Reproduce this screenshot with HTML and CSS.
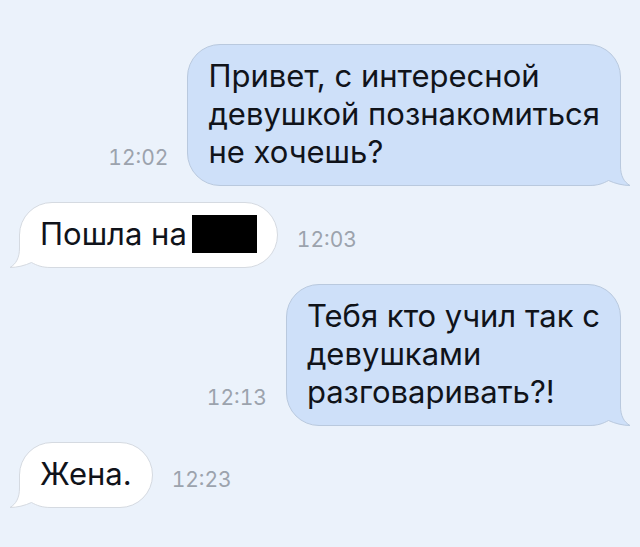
FILE: index.html
```html
<!DOCTYPE html>
<html lang="ru">
<head>
    <meta charset="UTF-8">
    <meta name="viewport" content="width=device-width, initial-scale=1.0">
    <title>Сообщения</title>
    <link rel="stylesheet" href="styles.css">
</head>
<body>
    <main class="chat">
        <div class="message out">
            <time class="time">12:02</time>
            <div class="bubble">
                <p>Привет, с интересной<br>девушкой познакомиться<br>не хочешь?</p>
                <svg class="tail" width="44" height="34" viewBox="0 0 44 34" aria-hidden="true">
                    <path class="tail-fill" d="M0 0H33.5V14C33.5 24 37 30 43 33.5C36 33.5 28 31.5 21.5 28.5C16 31.5 11 33.5 2 33.5H0Z"/>
                    <path class="tail-line" d="M33.5 0V14C33.5 24 37 30 43 33.5C36 33.5 28 31.5 21.5 28.5C16 31.5 11 33.5 2 33.5H0"/>
                </svg>
            </div>
        </div>
        <div class="message in">
            <div class="bubble">
                <p>Пошла на<span class="censored"></span></p>
                <svg class="tail" width="44" height="34" viewBox="0 0 44 34" aria-hidden="true">
                    <path class="tail-fill" d="M0 0H33.5V14C33.5 24 37 30 43 33.5C36 33.5 28 31.5 21.5 28.5C16 31.5 11 33.5 2 33.5H0Z"/>
                    <path class="tail-line" d="M33.5 0V14C33.5 24 37 30 43 33.5C36 33.5 28 31.5 21.5 28.5C16 31.5 11 33.5 2 33.5H0"/>
                </svg>
            </div>
            <time class="time">12:03</time>
        </div>
        <div class="message out">
            <time class="time">12:13</time>
            <div class="bubble">
                <p>Тебя кто учил так с<br>девушками<br>разговаривать?!</p>
                <svg class="tail" width="44" height="34" viewBox="0 0 44 34" aria-hidden="true">
                    <path class="tail-fill" d="M0 0H33.5V14C33.5 24 37 30 43 33.5C36 33.5 28 31.5 21.5 28.5C16 31.5 11 33.5 2 33.5H0Z"/>
                    <path class="tail-line" d="M33.5 0V14C33.5 24 37 30 43 33.5C36 33.5 28 31.5 21.5 28.5C16 31.5 11 33.5 2 33.5H0"/>
                </svg>
            </div>
        </div>
        <div class="message in">
            <div class="bubble">
                <p>Жена.</p>
                <svg class="tail" width="44" height="34" viewBox="0 0 44 34" aria-hidden="true">
                    <path class="tail-fill" d="M0 0H33.5V14C33.5 24 37 30 43 33.5C36 33.5 28 31.5 21.5 28.5C16 31.5 11 33.5 2 33.5H0Z"/>
                    <path class="tail-line" d="M33.5 0V14C33.5 24 37 30 43 33.5C36 33.5 28 31.5 21.5 28.5C16 31.5 11 33.5 2 33.5H0"/>
                </svg>
            </div>
            <time class="time">12:23</time>
        </div>
    </main>
</body>
</html>
```
FILE: styles.css
```css
body {
    margin: 0;
    background: #ebf2fb;
    font-family: Inter, "Liberation Sans", sans-serif;
    color: #10131a;
}

.chat {
    display: flex;
    flex-direction: column;
    gap: 16px;
    padding: 44px 19px 38px;
}

.message {
    display: flex;
    align-items: flex-end;
    gap: 19px;
}

.out {
    justify-content: flex-end;
}

.bubble {
    position: relative;
    padding: 12px 20px 14px;
    border: 1px solid #b9c9de;
    border-radius: 33px;
    background: #cee0f9;
}

.bubble p {
    position: relative;
    z-index: 1;
    margin: 0;
    font-size: 31px;
    line-height: 38px;
}

.in .bubble {
    border-color: #d5dae1;
    background: #fff;
}

/* the tail covers the rounded corner of the bubble */
.tail {
    position: absolute;
    right: -11px;
    bottom: -1px;
}

.in .tail {
    right: auto;
    left: -11px;
    transform: scaleX(-1);
}

.tail-fill {
    fill: #cee0f9;
}

.tail-line {
    fill: none;
    stroke: #b9c9de;
}

.in .tail-fill {
    fill: #fff;
}

.in .tail-line {
    stroke: #d5dae1;
}

.time {
    padding-bottom: 14px;
    font-size: 21px;
    font-variant-numeric: tabular-nums;
    line-height: 28px;
    color: #9ca3ad;
}

.censored {
    display: inline-block;
    width: 65px;
    height: 38px;
    margin-left: 5px;
    vertical-align: top;
    background: #000;
}
```
